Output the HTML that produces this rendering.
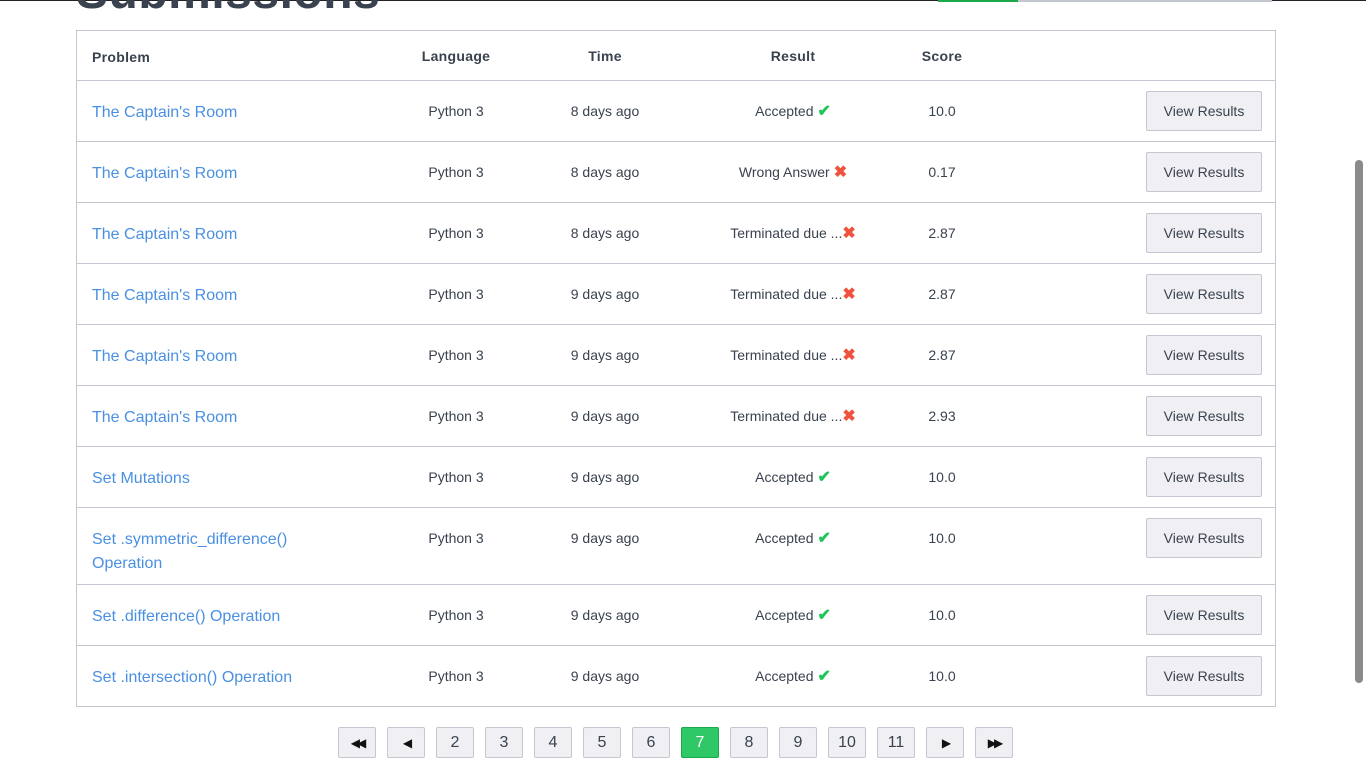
<!DOCTYPE html>
<html><head><meta charset="utf-8"><style>
*{box-sizing:border-box;margin:0;padding:0}
body{width:1366px;height:768px;overflow:hidden;background:#fff;font-family:"Liberation Sans",sans-serif;color:#39424e;position:relative}
.topline{position:absolute;left:0;top:0;width:1366px;height:1px;background:#222}
.bar1{position:absolute;left:938px;top:0;width:80px;height:2px;background:#1ba94c}
.bar2{position:absolute;left:1018px;top:0;width:254px;height:2px;background:#c2c7d0}
h1{position:absolute;left:76px;top:-35px;font-size:48px;font-weight:bold;color:#39424e;letter-spacing:0.5px}
.tbl{position:absolute;left:76px;top:30px;width:1200px;border:1px solid #c2c7d0}
.row{position:relative;height:61px;border-top:1px solid #c2c7d0}
.row:first-child{border-top:none;height:49px}
.row.tall{height:77px}
.c{position:absolute;font-size:14px;white-space:nowrap;line-height:18px}
.hd .c{top:17px;font-weight:bold;font-size:14px;letter-spacing:0.3px}
.p{left:15px;top:20px;font-size:16px;color:#4a90e2;line-height:24px}
.l{left:379px;width:0;display:flex;justify-content:center}
.row .l,.row .t,.row .r,.row .s{top:21px}
.hd .l,.hd .t,.hd .r,.hd .s{top:16px}
.t{left:528px;width:0;display:flex;justify-content:center}
.r{left:716px;width:0;display:flex;justify-content:center}
.s{left:865px;width:0;display:flex;justify-content:center}
.btn{position:absolute;left:1069px;top:10px;width:116px;height:40px;background:#f0f0f4;border:1px solid #c2c7d0;border-radius:2px;font-size:14px;line-height:38px;text-align:center;color:#39424e}
.ok,.x{font-weight:bold;margin-left:4px;font-size:16px;line-height:18px;position:relative;top:1px}
.ok{color:#1fc55b}
.x{color:#f0533d}
.pg{position:absolute;top:727px;width:38px;height:31px;background:#f0f0f4;border:1px solid #c2c7d0;border-radius:2px;font-size:16px;line-height:29px;text-align:center;color:#39424e}
.pg.a{background:#2ec866;border-color:#1ba94c;color:#fff}
.ar{font-size:12px;color:#111;letter-spacing:-3px}
.sb{position:absolute;left:1355px;top:160px;width:8px;height:523px;background:#8a8a8a;border-radius:4px}
</style></head><body>
<div class="topline"></div><div class="bar1"></div><div class="bar2"></div>
<h1>Submissions</h1>
<div class="tbl">
<div class="row hd"><span class="c" style="left:15px">Problem</span><span class="c l">Language</span><span class="c t">Time</span><span class="c r">Result</span><span class="c s">Score</span></div>
<div class="row"><span class="c p">The Captain's Room</span><span class="c l">Python 3</span><span class="c t">8 days ago</span><span class="c r">Accepted<span class="ok">✔</span></span><span class="c s">10.0</span><div class="btn">View Results</div></div>
<div class="row"><span class="c p">The Captain's Room</span><span class="c l">Python 3</span><span class="c t">8 days ago</span><span class="c r">Wrong Answer<span class="x">✖</span></span><span class="c s">0.17</span><div class="btn">View Results</div></div>
<div class="row"><span class="c p">The Captain's Room</span><span class="c l">Python 3</span><span class="c t">8 days ago</span><span class="c r">Terminated due ...<span class="x" style="margin-left:0">✖</span></span><span class="c s">2.87</span><div class="btn">View Results</div></div>
<div class="row"><span class="c p">The Captain's Room</span><span class="c l">Python 3</span><span class="c t">9 days ago</span><span class="c r">Terminated due ...<span class="x" style="margin-left:0">✖</span></span><span class="c s">2.87</span><div class="btn">View Results</div></div>
<div class="row"><span class="c p">The Captain's Room</span><span class="c l">Python 3</span><span class="c t">9 days ago</span><span class="c r">Terminated due ...<span class="x" style="margin-left:0">✖</span></span><span class="c s">2.87</span><div class="btn">View Results</div></div>
<div class="row"><span class="c p">The Captain's Room</span><span class="c l">Python 3</span><span class="c t">9 days ago</span><span class="c r">Terminated due ...<span class="x" style="margin-left:0">✖</span></span><span class="c s">2.93</span><div class="btn">View Results</div></div>
<div class="row"><span class="c p">Set Mutations</span><span class="c l">Python 3</span><span class="c t">9 days ago</span><span class="c r">Accepted<span class="ok">✔</span></span><span class="c s">10.0</span><div class="btn">View Results</div></div>
<div class="row tall"><span class="c p">Set .symmetric_difference()<br>Operation</span><span class="c l">Python 3</span><span class="c t">9 days ago</span><span class="c r">Accepted<span class="ok">✔</span></span><span class="c s">10.0</span><div class="btn">View Results</div></div>
<div class="row"><span class="c p">Set .difference() Operation</span><span class="c l">Python 3</span><span class="c t">9 days ago</span><span class="c r">Accepted<span class="ok">✔</span></span><span class="c s">10.0</span><div class="btn">View Results</div></div>
<div class="row"><span class="c p">Set .intersection() Operation</span><span class="c l">Python 3</span><span class="c t">9 days ago</span><span class="c r">Accepted<span class="ok">✔</span></span><span class="c s">10.0</span><div class="btn">View Results</div></div>
</div>
<div class="pg" style="left:338px"><span class="ar">◀◀</span></div>
<div class="pg" style="left:387px"><span class="ar">◀</span></div>
<div class="pg" style="left:436px">2</div>
<div class="pg" style="left:485px">3</div>
<div class="pg" style="left:534px">4</div>
<div class="pg" style="left:583px">5</div>
<div class="pg" style="left:632px">6</div>
<div class="pg a" style="left:681px">7</div>
<div class="pg" style="left:730px">8</div>
<div class="pg" style="left:779px">9</div>
<div class="pg" style="left:828px">10</div>
<div class="pg" style="left:877px">11</div>
<div class="pg" style="left:926px"><span class="ar">▶</span></div>
<div class="pg" style="left:975px"><span class="ar">▶▶</span></div>
<div class="sb"></div>
</body></html>
